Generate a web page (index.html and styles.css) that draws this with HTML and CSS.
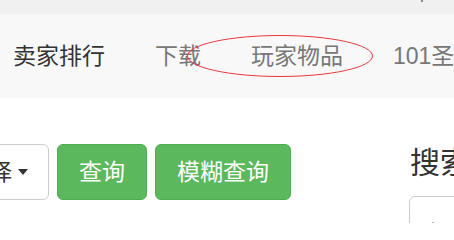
FILE: index.html
```html
<!DOCTYPE html>
<html lang="zh">
<head>
<meta charset="utf-8">
<title>卖家排行</title>
<link rel="stylesheet" href="styles.css">
</head>
<body>
<div class="topbar"><span class="dot"></span></div>
<nav class="navbar">
  <a class="brand" href="#">卖家排行</a>
  <ul class="nav">
    <li><a href="#">下载</a></li>
    <li><a href="#">玩家物品</a></li>
    <li><a href="#">101圣诞活动</a></li>
  </ul>
  <svg class="mark" width="190" height="44" viewBox="0 0 190 44"><ellipse cx="94" cy="22" rx="92.5" ry="20.5" fill="none" stroke="#e8383d" stroke-width="1"/></svg>
</nav>
<main class="content">
  <div class="left-col">
    <div class="btn-row">
      <button class="btn btn-default">请选择<span class="caret"></span></button>
      <button class="btn btn-success">查询</button>
      <button class="btn btn-success">模糊查询</button>
    </div>
  </div>
  <div class="right-col">
    <h3 class="title">搜索</h3>
    <div class="input">年份选择</div>
  </div>
</main>
</body>
</html>
```
FILE: styles.css
```css
* { box-sizing: border-box; }
html, body {
  margin: 0;
  padding: 0;
  background: #fff;
  overflow: hidden;
  width: 454px;
  height: 223px;
}
body {
  font-family: "Liberation Sans", "Noto Sans CJK SC", sans-serif;
  color: #333;
}
.topbar {
  height: 14px;
  background: #f0f0f0;
  position: relative;
}
.dot {
  position: absolute;
  left: 421px;
  top: 0;
  width: 2px;
  height: 2px;
  background: #888;
}
.navbar {
  position: relative;
  height: 84px;
  background: #f8f8f8;
  display: flex;
  align-items: center;
  white-space: nowrap;
  overflow: hidden;
  font-size: 23px;
  line-height: 30px;
}
.brand {
  color: #333;
  text-decoration: none;
  padding: 0 25px 0 13px;
}
.nav {
  display: flex;
  list-style: none;
  margin: 0;
  padding: 0;
}
.nav a {
  display: block;
  color: #777;
  text-decoration: none;
  padding: 0 25px;
}
.mark {
  position: absolute;
  left: 186px;
  top: 20px;
}
.content {
  display: grid;
  grid-template-columns: 488px 1fr;
  margin: 46px 0 0 -79px;
}
.btn-row {
  display: flex;
  gap: 8px;
}
.btn {
  font-family: inherit;
  font-size: 23px;
  line-height: 30px;
  padding: 12px 21px;
  border: 1px solid;
  border-radius: 6px;
  white-space: nowrap;
  display: flex;
  align-items: center;
}
.btn-default {
  background: #fff;
  border-color: #ccc;
  color: #333;
  padding-right: 20px;
}
.caret {
  display: inline-block;
  margin-left: 6px;
  width: 0;
  height: 0;
  border-top: 6px solid #333;
  border-left: 5.5px solid transparent;
  border-right: 5.5px solid transparent;
}
.btn-success {
  background: #5cb85c;
  border-color: #4cae4c;
  color: #fff;
}
.right-col {
  white-space: nowrap;
}
.title {
  font-size: 30px;
  line-height: 33px;
  font-weight: 400;
  margin: 2px 0 17px 1px;
  color: #333;
}
.input {
  height: 60px;
  border: 1px solid #ccc;
  border-radius: 6px;
  padding: 22px 16px 6px;
  font-size: 23px;
  line-height: 30px;
  color: #555;
}
```
